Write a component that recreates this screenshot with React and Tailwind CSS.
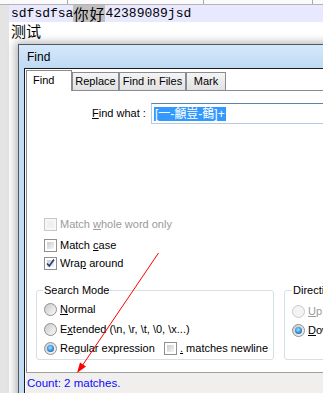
import React from "react";

function Check({ checked, disabled }) {
  return (
    <span
      className={`relative w-[13px] h-[13px] shrink-0 border p-[2px] ${
        disabled ? "border-[#c8c8c8] bg-[#f7f7f7]" : "border-[#8e8f8f] bg-white"
      }`}
    >
      <span
        className={`block w-full h-full ${
          disabled ? "bg-[#f0f0f0]" : "bg-gradient-to-br from-[#cbcbcb] to-[#f6f6f6]"
        }`}
      />
      {checked && (
        <svg className="absolute left-0 top-0" width="11" height="11" viewBox="0 0 11 11">
          <path d="M2 5.5 L4.3 8 L9 1.5" fill="none" stroke="#26407a" strokeWidth="1.7" />
        </svg>
      )}
    </span>
  );
}

function Radio({ checked, disabled }) {
  return (
    <span
      className={`w-[13px] h-[13px] shrink-0 rounded-full border flex items-center justify-center ${
        disabled
          ? "border-[#cacaca] bg-[#f3f3f3]"
          : "border-[#8e8f8f] bg-gradient-to-br from-[#c9c9c9] to-[#fbfbfb]"
      }`}
    >
      {checked && (
        <span className="w-[7px] h-[7px] rounded-full bg-[radial-gradient(circle_at_45%_40%,#a8e4ff_0%,#3596de_50%,#0d4585_100%)]" />
      )}
    </span>
  );
}

function Tab({ label, width }) {
  return (
    <div
      className={`h-[18px] ${width} border border-b-0 border-[#898c95] bg-gradient-to-b from-[#f4f4f4] to-[#e2e2e2] text-center leading-[17px]`}
    >
      {label}
    </div>
  );
}

export default function App() {
  return (
    <div className="relative w-[323px] h-[393px] overflow-hidden bg-white flex flex-col font-['Liberation_Sans',Arial,sans-serif] text-[11px] text-black">
      {/* editor tab strip remnant */}
      <div className="h-[5px] shrink-0 flex border-b border-[#b4b4b4] bg-[#fafafa]">
        <div className="w-[68px] border-r border-[#a8a8a8]" />
        <div className="w-[136px] border-r border-[#a8a8a8]" />
        <div className="w-[109px] border-r border-[#a8a8a8]" />
      </div>

      <div className="flex flex-1 min-h-0">
        <div className="w-[9px] shrink-0 bg-[#e4e4e4]" />

        <div className="flex-1 min-w-0 flex flex-col">
          {/* editor lines */}
          <div className="h-[17px] shrink-0 bg-[#e8e8ff] pl-[2px] leading-[17px] whitespace-nowrap font-['Liberation_Mono',monospace] text-[13px]">
            sdfsdfsa
            <span className="inline-block align-top h-[17px] w-[32px] bg-[#c0c0c0] font-['Noto_Sans_CJK_SC',sans-serif] text-[15px] leading-[17px] tracking-[1px]">
              你好
            </span>
            42389089jsd
          </div>
          <div className="h-[17px] shrink-0 pl-[2px] leading-[17px] font-['Noto_Sans_CJK_SC',sans-serif] text-[15px]">
            测试
          </div>

          {/* Find dialog */}
          <div className="mt-[5px] ml-[9px] w-[340px] h-[360px] shrink-0 border-l border-t border-[#4f5863] bg-[#c3dcf5] shadow-[-3px_-2px_8px_rgba(0,0,0,0.28)] flex flex-col">
            <div className="h-[23px] shrink-0 pl-[8px] flex items-center text-[12px] bg-gradient-to-b from-[#d5e8fb] to-[#c0daf4]">
              Find
            </div>

            <div className="ml-[5px] flex-1 border-l border-t border-[#1c1c1c] bg-white pl-[1px] pt-[1px] flex flex-col">
              <div className="h-[20px] shrink-0 flex items-end">
                <div className="relative z-10 -mb-px h-[21px] w-[46px] border border-b-0 border-[#898c95] bg-white pl-[6px] leading-[19px]">
                  Find
                </div>
                <Tab label="Replace" width="w-[47px]" />
                <Tab label="Find in Files" width="w-[67px]" />
                <Tab label="Mark" width="w-[40px]" />
              </div>

              <div className="h-[282px] shrink-0 border-l border-t border-[#898c95] flex flex-col">
                {/* find what */}
                <div className="mt-[12px] ml-[65px] h-[21px] flex items-center">
                  <span className="w-[59px] shrink-0">
                    <span className="underline">F</span>ind what :
                  </span>
                  <div className="flex-1 h-[21px] border border-[#b6cbe0] border-t-[#5b83ad] flex items-center pl-[2px]">
                    <span className="h-[14px] px-[1px] bg-[#3399ff] text-white text-[12px] leading-[14px] font-['Liberation_Sans','Noto_Sans_CJK_SC',sans-serif]">
                      [一-龥豈-鶴]+
                    </span>
                  </div>
                </div>

                {/* options */}
                <div className="mt-[94px] ml-[17px] h-[13px] flex items-center gap-[3px] text-[#9a9a9a]">
                  <Check disabled />
                  <span>
                    Match <span className="underline">w</span>hole word only
                  </span>
                </div>
                <div className="mt-[8px] ml-[17px] h-[13px] flex items-center gap-[3px]">
                  <Check />
                  <span>
                    Match <span className="underline">c</span>ase
                  </span>
                </div>
                <div className="mt-[5px] ml-[17px] h-[13px] flex items-center gap-[3px]">
                  <Check checked />
                  <span>
                    Wra<span className="underline">p</span> around
                  </span>
                </div>

                {/* groups */}
                <div className="mt-[20px] ml-[9px] flex">
                  <div className="relative w-[238px] h-[70px] shrink-0 border border-[#d5dfe5] rounded-[3px] pl-[7px] pt-[12px] flex flex-col">
                    <span className="absolute left-[6px] -top-[8px] bg-white px-[1px] leading-[14px]">
                      Search Mode
                    </span>
                    <div className="h-[13px] flex items-center gap-[3px]">
                      <Radio />
                      <span>
                        <span className="underline">N</span>ormal
                      </span>
                    </div>
                    <div className="mt-[7px] h-[13px] flex items-center gap-[3px]">
                      <Radio />
                      <span>
                        E<span className="underline">x</span>tended (\n, \r, \t, \0, \x...)
                      </span>
                    </div>
                    <div className="mt-[6px] h-[13px] flex items-center">
                      <Radio checked />
                      <span className="ml-[3px] w-[104px] shrink-0">
                        Re<span className="underline">g</span>ular expression
                      </span>
                      <Check />
                      <span className="ml-[3px]">
                        <span className="underline">.</span> matches newline
                      </span>
                    </div>
                  </div>

                  <div className="relative ml-[10px] w-[120px] h-[70px] shrink-0 border border-[#d5dfe5] rounded-[3px] pl-[7px] pt-[14px] flex flex-col">
                    <span className="absolute left-[7px] -top-[8px] bg-white px-[1px] leading-[14px]">
                      Direction
                    </span>
                    <div className="h-[13px] flex items-center gap-[3px] text-[#9a9a9a]">
                      <Radio disabled />
                      <span>
                        <span className="underline">U</span>p
                      </span>
                    </div>
                    <div className="mt-[6px] h-[13px] flex items-center gap-[3px]">
                      <Radio checked />
                      <span>
                        <span className="underline">D</span>own
                      </span>
                    </div>
                  </div>
                </div>
              </div>

              {/* status */}
              <div className="flex-1 border-t border-[#a0a0a0] bg-[#f0efed] pl-[1px] pt-[3px] text-[11.5px] leading-[14px] text-[#0a0aff]">
                Count: 2 matches.
              </div>
            </div>
          </div>
        </div>
      </div>

      {/* red annotation arrow */}
      <svg className="absolute left-0 top-0 pointer-events-none" width="323" height="393" viewBox="0 0 323 393">
        <line x1="158.5" y1="253" x2="82" y2="366" stroke="#ff0000" strokeWidth="1" />
        <polygon points="77,373 86,366.5 80,362.5" fill="#ff0000" />
      </svg>
    </div>
  );
}
